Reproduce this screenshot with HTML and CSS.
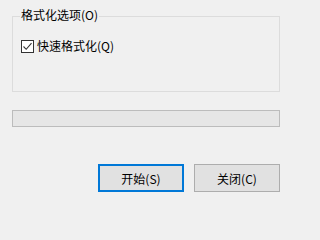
FILE: index.html
```html
<!DOCTYPE html>
<html lang="zh-CN">
<head>
<meta charset="utf-8">
<link rel="stylesheet" href="styles.css">
</head>
<body>
<div class="dialog">
  <fieldset class="group">
    <legend class="group-title">格式化选项(O)</legend>
    <label class="check">
      <span class="box"><svg width="11" height="11" viewBox="0 0 11 11"><path d="M1.5 5.5 L4.2 8.3 L9.5 2.2" fill="none" stroke="#333" stroke-width="1.1"/></svg></span>
      <span class="check-text">快速格式化(Q)</span>
    </label>
  </fieldset>
  <div class="progress"></div>
  <div class="buttons">
    <button class="btn btn-default">开始(S)</button>
    <button class="btn">关闭(C)</button>
  </div>
</div>
</body>
</html>
```
FILE: styles.css
```css
html, body {
  margin: 0;
  padding: 0;
  background: #f0f0f0;
  font-family: "Noto Sans CJK SC", "Microsoft YaHei", sans-serif;
  font-size: 12px;
  color: #000;
}
.dialog {
  width: 287px;
  height: 225px;
  padding: 10px 7px 0 12px;
  box-sizing: border-box;
  display: flex;
  flex-direction: column;
}
.group {
  margin: 0;
  padding: 0 0 0 8px;
  border: 1px solid #dcdcdc;
  height: 82px;
  box-sizing: border-box;
  width: 268px;
  position: relative;
}
.group-title {
  padding: 0 1px;
  margin-left: -1px;
  line-height: 12px;
  position: relative;
  top: -1px;
}
.check {
  display: flex;
  align-items: center;
  gap: 3px;
  margin-top: 17px;
  height: 14px;
}
.box {
  width: 11px;
  height: 11px;
  border: 1px solid #333;
  background: #fff;
  display: flex;
}
.check-text {
  line-height: 14px;
}
.progress {
  margin-top: 18px;
  width: 268px;
  height: 17px;
  box-sizing: border-box;
  border: 1px solid #bcbcbc;
  background: #e6e6e6;
}
.buttons {
  display: flex;
  justify-content: flex-end;
  gap: 10px;
  margin-top: 37px;
  width: 268px;
}
.btn {
  width: 86px;
  height: 28px;
  box-sizing: border-box;
  border: 1px solid #adadad;
  background: #e1e1e1;
  font-family: inherit;
  font-size: 12px;
  color: #000;
  padding: 0;
  margin: 0;
}
.btn-default {
  border: 2px solid #0078d7;
}
```
